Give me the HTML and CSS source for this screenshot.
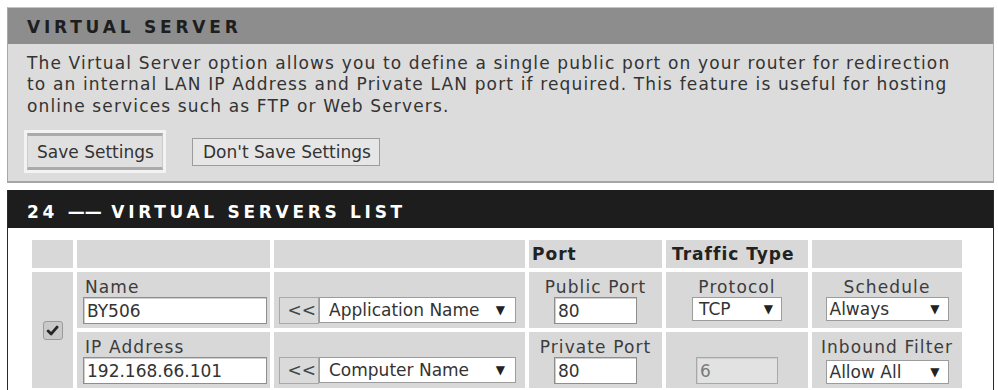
FILE: index.html
```html
<!DOCTYPE html>
<html lang="en">
<head>
<meta charset="utf-8">
<title>Virtual Server</title>
<link rel="stylesheet" href="styles.css">
</head>
<body>
<div class="panel panel-top">
  <div class="panel-head">VIRTUAL SERVER</div>
  <div class="panel-body">
    <p class="desc">The Virtual Server option allows you to define a single public port on your router for redirection<br>to an internal LAN IP Address and Private LAN port if required. This feature is useful for hosting<br>online services such as FTP or Web Servers.</p>
    <div class="actions">
      <button class="btn btn-save" type="button">Save Settings</button>
      <button class="btn btn-cancel" type="button">Don't Save Settings</button>
    </div>
  </div>
</div>

<div class="panel panel-list">
  <div class="list-head">24 <span class="dash">——</span> VIRTUAL SERVERS LIST</div>
  <table class="vs">
    <colgroup>
      <col class="c1"><col class="c2"><col class="c3"><col class="c4"><col class="c5"><col class="c6">
    </colgroup>
    <tr class="hdr">
      <td></td><td></td><td></td>
      <td class="th">Port</td>
      <td class="th th-wide">Traffic Type</td>
      <td></td>
    </tr>
    <tr class="row">
      <td rowspan="2" class="chk-cell">
        <span class="check"><svg viewBox="0 0 12 12" width="13" height="13"><path d="M2 6.4 L4.8 9.2 L10.2 2.8" fill="none" stroke="#262626" stroke-width="2.6" stroke-linecap="round" stroke-linejoin="round"/></svg></span>
      </td>
      <td class="left"><div class="lbl">Name</div><input class="txt txt-wide" type="text" value="BY506"></td>
      <td class="left pick-cell"><div class="lbl"></div><div class="pick"><span class="pick-btn">&lt;&lt;</span><span class="sel sel-app"><span>Application Name</span><span class="arrow">▼</span></span></div></td>
      <td class="center"><div class="lbl">Public Port</div><input class="txt txt-port" type="text" value="80"></td>
      <td class="center"><div class="lbl">Protocol</div><span class="sel sel-proto"><span>TCP</span><span class="arrow">▼</span></span></td>
      <td class="center"><div class="lbl">Schedule</div><span class="sel sel-sched"><span>Always</span><span class="arrow">▼</span></span></td>
    </tr>
    <tr class="row">
      <td class="left"><div class="lbl">IP Address</div><input class="txt txt-wide" type="text" value="192.168.66.101"></td>
      <td class="left pick-cell"><div class="lbl"></div><div class="pick"><span class="pick-btn">&lt;&lt;</span><span class="sel sel-app"><span>Computer Name</span><span class="arrow">▼</span></span></div></td>
      <td class="center"><div class="lbl">Private Port</div><input class="txt txt-port" type="text" value="80"></td>
      <td class="center"><div class="lbl"></div><input class="txt txt-dis" type="text" value="6" disabled></td>
      <td class="center"><div class="lbl">Inbound Filter</div><span class="sel sel-sched sel-low"><span>Allow All</span><span class="arrow">▼</span></span></td>
    </tr>
  </table>
</div>
</body>
</html>
```

FILE: styles.css
```css
html, body {
  margin: 0;
  padding: 0;
  background: #ffffff;
}
body {
  font-family: "DejaVu Sans", Verdana, sans-serif;
  color: #333;
  width: 998px;
  height: 390px;
  overflow: hidden;
}

.panel {
  width: 987px;
  margin-left: 7px;
  box-sizing: border-box;
}

.panel-top {
  margin-top: 7px;
  background: #dcdcdc;
  border: 1px solid #a8a8a8;
  border-top-color: #c4c4c4;
  border-bottom: 2px solid #a6a6a6;
}

.panel-head {
  height: 36px;
  background: #8d8d8d;
  padding-left: 19px;
  font-weight: bold;
  font-size: 17px;
  letter-spacing: 3.8px;
  line-height: 38px;
  color: #1e1e1e;
}

.panel-body {
  padding: 8.5px 19px 11px;
}

.desc {
  margin: 0;
  font-size: 17px;
  letter-spacing: 1.15px;
  line-height: 21.5px;
  color: #333;
  white-space: nowrap;
}

.actions {
  margin-top: 16px;
  display: flex;
  align-items: center;
}

.btn {
  font-family: "DejaVu Sans", Verdana, sans-serif;
  font-size: 17px;
  color: #333;
  background: #e6e6e6;
  border: 1px solid #9c9c9c;
  margin: 0;
  box-sizing: border-box;
}

.btn-save {
  width: 136px;
  height: 37px;
  padding: 0 0 0 9px;
  text-align: left;
  background: #e0e0e0;
  border-top: 3px solid #ababab;
  border-bottom: 3px solid #ababab;
  border-left: 1px solid #cbcbcb;
  border-right: 1px solid #cbcbcb;
  box-shadow: 0 0 0 3px #f3f3f3;
}

.btn-cancel {
  width: 188px;
  height: 28px;
  padding: 0 0 0 10px;
  text-align: left;
  margin-left: 29px;
}

.panel-list {
  margin-top: 7px;
  height: 200px;
  overflow: hidden;
  border-left: 1px solid #2a2a2a;
  border-right: 1px solid #2a2a2a;
  background: #fff;
}

.list-head {
  height: 35px;
  padding-top: 3px;
  padding-left: 19px;
  background: #1d1d1d;
  color: #fff;
  font-weight: bold;
  font-size: 17px;
  letter-spacing: 3.7px;
  line-height: 38px;
}

.dash {
  letter-spacing: 0;
}

.vs {
  margin: 8px 0 0 20px;
  border-collapse: separate;
  border-spacing: 4px;
  table-layout: fixed;
  width: 938px;
}
.c1 { width: 41px; }
.c2 { width: 193px; }
.c3 { width: 251px; }
.c4 { width: 133px; }
.c5 { width: 142px; }
.c6 { width: 150px; }

.vs td {
  background: #d8d8d8;
  padding: 0;
  vertical-align: top;
}

.hdr td {
  height: 28px;
  vertical-align: middle;
}

.th {
  font-weight: bold;
  font-size: 17px;
  letter-spacing: 1px;
  color: #222;
  padding-left: 3px !important;
}
.th-wide {
  padding-left: 6px !important;
}

.row td {
  height: 56px;
  padding-top: 5px;
  box-sizing: border-box;
}

.chk-cell {
  vertical-align: middle !important;
  text-align: center;
  padding-top: 0 !important;
}

.check {
  display: inline-flex;
  align-items: center;
  justify-content: center;
  width: 20px;
  height: 19px;
  box-sizing: border-box;
  border: 1px solid #9a9a9a;
  border-radius: 3px;
  background: #c9c9c9;
  vertical-align: middle;
}

.lbl {
  height: 20px;
  font-size: 17px;
  line-height: 20px;
  letter-spacing: 1.1px;
  color: #3c3c3c;
  white-space: nowrap;
}

.left {
  padding-left: 6px !important;
}
.left .lbl {
  padding-left: 2px;
}
.center {
  text-align: center;
}
.pick-cell {
  padding-left: 5px !important;
}

.txt {
  display: block;
  height: 27px;
  box-sizing: border-box;
  border: 1px solid #8e8e8e;
  box-shadow: inset 1px 1px 0 #cfcfcf;
  background: #fff;
  padding: 0 3px;
  margin: 0;
  font-family: "DejaVu Sans", Verdana, sans-serif;
  font-size: 17px;
  color: #333;
}
.txt-wide { width: 184px; }
.txt-port { width: 83px; margin: 0 auto; }
.txt-dis {
  width: 82px;
  margin: 0 auto;
  background: #e2e2e2;
  color: #7a7a7a;
  border-color: #a8a8a8;
  -webkit-text-fill-color: #7a7a7a;
  opacity: 1;
}

.pick {
  display: flex;
  align-items: flex-start;
}
.pick-btn {
  width: 40px;
  height: 27px;
  box-sizing: border-box;
  background: #dadada;
  border: 1px solid #a8a8a8;
  font-size: 17px;
  line-height: 25px;
  text-align: right;
  padding-right: 2px;
  color: #444;
}

.sel {
  display: inline-flex;
  align-items: center;
  justify-content: space-between;
  height: 24px;
  box-sizing: border-box;
  background: #fff;
  border: 1px solid #9c9c9c;
  font-size: 17px;
  color: #333;
  white-space: nowrap;
  text-align: left;
}
.arrow {
  font-size: 12px;
  color: #222;
}
.sel-app {
  width: 197px;
  height: 26px;
  padding: 0 10px 0 9px;
}
.sel-proto {
  width: 90px;
  padding: 0 8px 0 6px;
}
.sel-sched {
  width: 123px;
  padding: 0 8px 0 3px;
}
.sel-low {
  margin-top: 3px;
}
```
